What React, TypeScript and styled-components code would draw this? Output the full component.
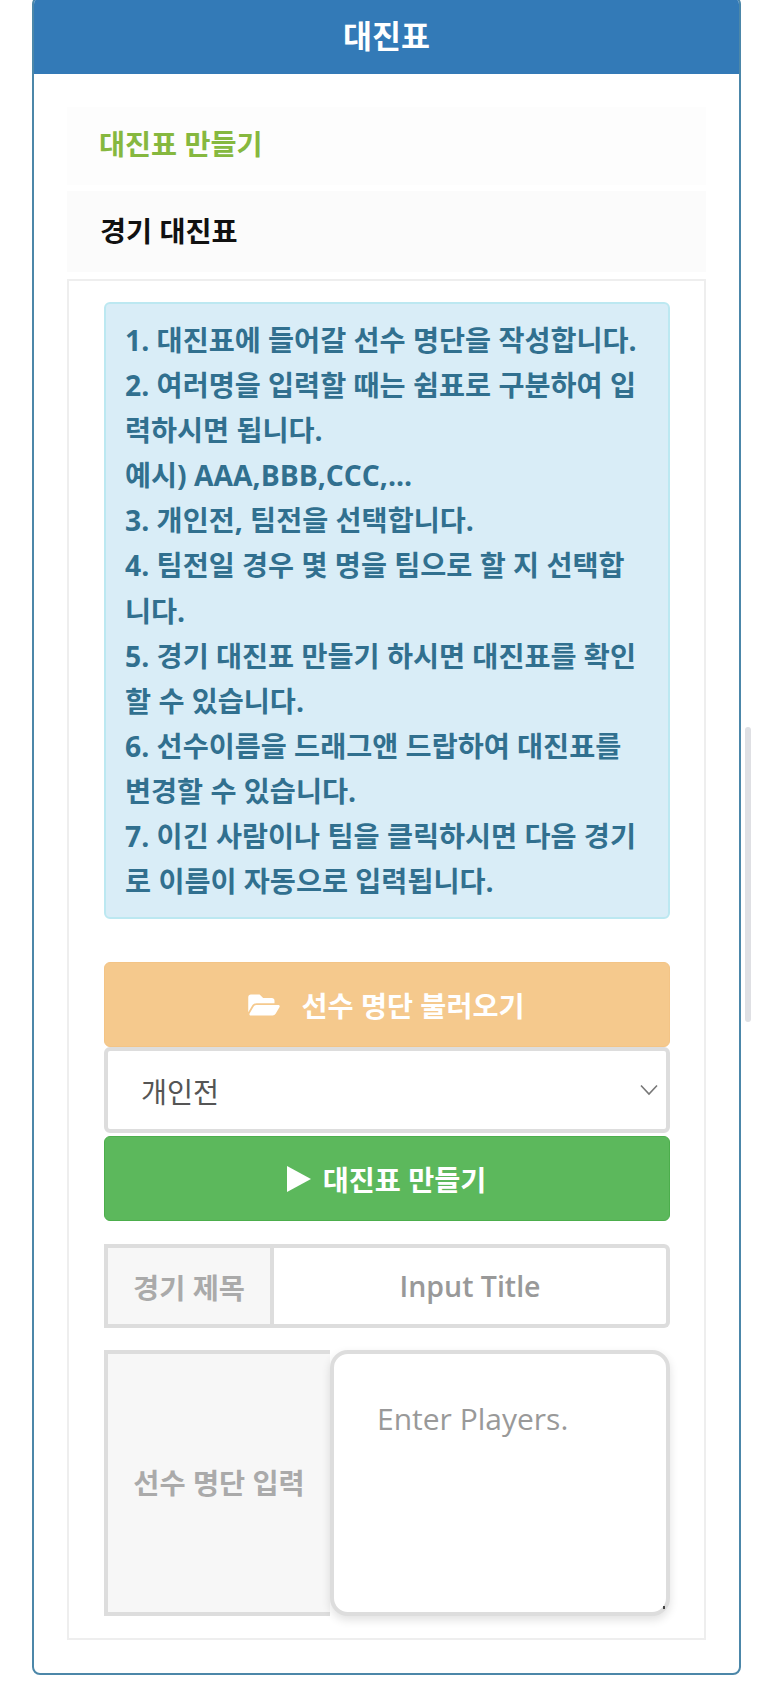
import React from "react";
import styled, { createGlobalStyle } from "styled-components";
import { FaFolderOpen } from "react-icons/fa";

const FONT = `"Open Sans", "Noto Sans CJK KR", "Noto Sans", sans-serif`;

const Global = createGlobalStyle`
  html, body { margin: 0; padding: 0; background: #fff; }
  body { height: 1695px; overflow: hidden; font-family: ${FONT}; }
  * { box-sizing: border-box; }
`;

const Page = styled.div`
  position: relative;
  width: 773px;
  height: 1695px;
  padding: 0 32px;
  overflow: hidden;
`;

const Card = styled.section`
  margin-top: -4px;
  height: 1679px;
  border: 2px solid #4c87a9;
  border-radius: 8px;
  overflow: hidden;
  display: flex;
  flex-direction: column;
`;

const CardHeader = styled.h1`
  margin: 0;
  height: 76px;
  flex: none;
  padding-bottom: 4px;
  background: #337ab7;
  color: #fff;
  font-size: 31.5px;
  font-weight: 700;
  display: flex;
  align-items: center;
  justify-content: center;
`;

const CardBody = styled.div`
  flex: 1;
  padding: 33px 33px 0 33px;
  display: flex;
  flex-direction: column;
`;

const Heading = styled.div<{ $color: string; $bg: string; $height: number; $mb: number; $lift: number; $indent: number }>`
  height: ${(p) => p.$height}px;
  margin-bottom: ${(p) => p.$mb}px;
  flex: none;
  padding: 0 0 ${(p) => p.$lift}px ${(p) => p.$indent}px;
  display: flex;
  align-items: center;
  background: ${(p) => p.$bg};
  color: ${(p) => p.$color};
  font-size: 28.3px;
  font-weight: 700;
`;

const Box = styled.div`
  height: 1361px;
  border: 2px solid #eeeeee;
  padding: 21px 34px 0 35px;
  display: flex;
  flex-direction: column;
`;

const Alert = styled.div`
  height: 617px;
  flex: none;
  background: #d9edf7;
  border: 2px solid #bce8f1;
  border-radius: 6px;
  padding: 14px 19px;
  color: #31708f;
  font-size: 28.3px;
  font-weight: 700;
  line-height: 45.1px;
  white-space: nowrap;
  margin-bottom: 43px;
`;

const Line = styled.div``;

const ActionButton = styled.button<{ $bg: string; $edge: string; $mb: number }>`
  width: 100%;
  height: 85px;
  flex: none;
  border: 1px solid ${(p) => p.$edge};
  border-radius: 6px;
  background: ${(p) => p.$bg};
  color: #fff;
  font-family: ${FONT};
  font-size: 28.3px;
  font-weight: 700;
  padding: 0 2px 0 0;
  margin-bottom: ${(p) => p.$mb}px;
  display: flex;
  align-items: center;
  justify-content: center;
`;

const FolderIcon = styled(FaFolderOpen)`
  width: 32px;
  height: 28px;
  margin-right: 22px;
`;

const PlayIcon = styled.svg`
  width: 25px;
  height: 26px;
  margin-right: 12px;
`;

const SelectBox = styled.div`
  height: 86px;
  flex: none;
  border: 4px solid #dddddd;
  border-radius: 6px;
  background: #fff;
  padding: 0 7px 0 33px;
  color: #555555;
  font-size: 28.3px;
  display: flex;
  align-items: center;
  justify-content: space-between;
  margin-bottom: 3px;
`;

const Chevron = styled.svg`
  width: 20px;
  height: 12px;
`;

const InputRow = styled.div`
  height: 84px;
  flex: none;
  display: flex;
  margin-bottom: 22px;
`;

const AddOn = styled.div<{ $width: number; $open?: boolean }>`
  width: ${(p) => p.$width}px;
  flex: none;
  background: #f7f7f7;
  border: 4px solid #dddddd;
  border-right-width: ${(p) => (p.$open ? 0 : 4)}px;
  padding-bottom: ${(p) => (p.$open ? 4 : 0)}px;
  color: #aaaaaa;
  font-size: 28.4px;
  font-weight: 700;
  display: flex;
  align-items: center;
  justify-content: center;
`;

const TitleInput = styled.div`
  flex: 1;
  border: 4px solid #dddddd;
  border-left: 0;
  border-radius: 0 6px 6px 0;
  background: #fff;
  color: #999999;
  font-size: 28.5px;
  font-weight: 600;
  display: flex;
  align-items: center;
  justify-content: center;
`;

const PlayersRow = styled.div`
  height: 266px;
  flex: none;
  display: flex;
`;

const PlayersArea = styled.div`
  position: relative;
  flex: 1;
  border: 4px solid #dddddd;
  border-radius: 18px;
  background: #fff;
  box-shadow: 0 4px 10px rgba(0, 0, 0, 0.12);
  padding: 45px 0 0 43px;
  color: #999999;
  font-size: 30px;
  line-height: 40px;
`;

const Grip = styled.span`
  position: absolute;
  right: 1px;
  bottom: 3px;
  width: 2px;
  height: 3px;
  background: #444;
`;

const ScrollThumb = styled.div`
  position: absolute;
  left: 745px;
  top: 727px;
  width: 6px;
  height: 295px;
  border-radius: 3px;
  background: #dfe0e4;
`;

const lines = [
  "1. 대진표에 들어갈 선수 명단을 작성합니다.",
  "2. 여러명을 입력할 때는 쉼표로 구분하여 입",
  "력하시면 됩니다.",
  "예시) AAA,BBB,CCC,...",
  "3. 개인전, 팀전을 선택합니다.",
  "4. 팀전일 경우 몇 명을 팀으로 할 지 선택합",
  "니다.",
  "5. 경기 대진표 만들기 하시면 대진표를 확인",
  "할 수 있습니다.",
  "6. 선수이름을 드래그앤 드랍하여 대진표를",
  "변경할 수 있습니다.",
  "7. 이긴 사람이나 팀을 클릭하시면 다음 경기",
  "로 이름이 자동으로 입력됩니다.",
];

export default function App() {
  return (
    <Page>
      <Global />
      <Card>
        <CardHeader>대진표</CardHeader>
        <CardBody>
          <Heading $color="#86b83f" $bg="#fdfdfd" $height={78} $mb={6} $lift={8} $indent={32}>대진표 만들기</Heading>
          <Heading $color="#111111" $bg="#fbfbfb" $height={81} $mb={7} $lift={4} $indent={33}>경기 대진표</Heading>
          <Box>
            <Alert>
              {lines.map((l) => (
                <Line key={l}>{l}</Line>
              ))}
            </Alert>
            <ActionButton $bg="#f5c98d" $edge="#f3c486" $mb={0}>
              <FolderIcon />
              선수 명단 불러오기
            </ActionButton>
            <SelectBox>
              개인전
              <Chevron viewBox="0 0 20 12">
                <path d="M2 1.5 L10 10 L18 1.5" fill="none" stroke="#777" strokeWidth="1.6" />
              </Chevron>
            </SelectBox>
            <ActionButton $bg="#5cb85c" $edge="#4cae4c" $mb={23}>
              <PlayIcon viewBox="0 0 25 26">
                <polygon points="1,0 25,13 1,26" fill="#fff" />
              </PlayIcon>
              대진표 만들기
            </ActionButton>
            <InputRow>
              <AddOn $width={170}>경기 제목</AddOn>
              <TitleInput>Input Title</TitleInput>
            </InputRow>
            <PlayersRow>
              <AddOn $width={226} $open>선수 명단 입력</AddOn>
              <PlayersArea>
                Enter Players.
                <Grip />
              </PlayersArea>
            </PlayersRow>
          </Box>
        </CardBody>
      </Card>
      <ScrollThumb />
    </Page>
  );
}
